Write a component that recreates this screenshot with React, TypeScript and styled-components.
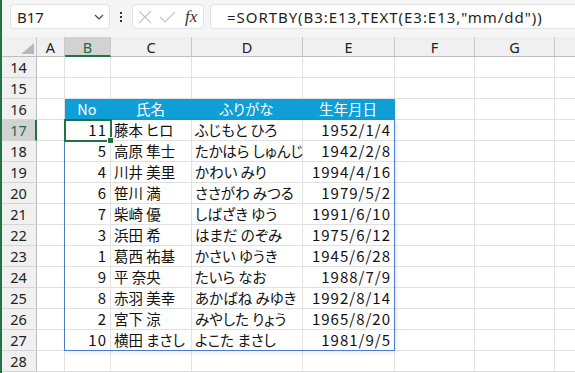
import React from "react";
import styled, { createGlobalStyle } from "styled-components";

const GlobalStyle = createGlobalStyle`
  html, body { margin: 0; padding: 0; background: #ffffff; }
  body { width: 575px; height: 373px; overflow: hidden; }
`;

const GREEN = "#217346";
const HEADER_BLUE = "#0f9ed5";
const GRID = "#e1e1e1";
const CELL_FONT = `"Noto Sans CJK JP", "Noto Sans", sans-serif`;
const UI_FONT = `"Noto Sans", "Open Sans", sans-serif`;

const Window = styled.div`
  width: 575px;
  height: 373px;
  border-left: 2px solid ${GREEN};
  box-sizing: border-box;
  overflow: hidden;
  background: #fff;
  display: flex;
  flex-direction: column;
`;

const FormulaBar = styled.div`
  height: 37px;
  flex: none;
  background: #f5f5f5;
  display: flex;
  align-items: flex-start;
  padding: 4px 0 0 8px;
  box-sizing: border-box;
  overflow: hidden;
`;

const Box = styled.div<{ $w: number }>`
  width: ${(p) => p.$w}px;
  flex: none;
  height: 25px;
  background: #fff;
  border: 1px solid #e3e3e3;
  border-radius: 4px;
  box-sizing: border-box;
  display: flex;
  align-items: center;
`;

const NameText = styled.span`
  font-family: ${UI_FONT};
  font-size: 15px;
  color: #1f1f1f;
  padding-left: 6px;
  flex: 1;
`;

const Chevron = styled.svg`
  width: 10px;
  height: 6px;
  margin-right: 5px;
`;

const Dots = styled.div`
  width: 22px;
  flex: none;
  height: 25px;
  display: flex;
  flex-direction: column;
  align-items: center;
  justify-content: center;
  gap: 2px;
  & > span {
    width: 2px;
    height: 2px;
    background: #333;
    display: block;
  }
`;

const ButtonRow = styled.div`
  display: flex;
  align-items: center;
  gap: 7px;
  padding-left: 5px;
`;

const Fx = styled.span`
  font-family: "Liberation Serif", "DejaVu Serif", serif;
  font-style: italic;
  font-size: 17px;
  color: #333;
  margin-left: 2px;
  line-height: 1;
`;

const FormulaText = styled.span`
  font-family: ${UI_FONT};
  font-size: 15px;
  letter-spacing: 0.95px;
  color: #1f1f1f;
  padding-left: 16px;
  white-space: nowrap;
`;

const Spacer = styled.div<{ $w: number }>`
  width: ${(p) => p.$w}px;
  flex: none;
`;

const SheetWrap = styled.div`
  position: relative;
  flex: 1;
  overflow: hidden;
`;

const COLS = ["A", "B", "C", "D", "E", "F", "G", ""];
const WIDTHS = [35, 28, 46, 81, 111, 92, 80, 80, 80];

const Sheet = styled.div`
  display: grid;
  grid-template-columns: ${WIDTHS.map((w) => w + "px").join(" ")};
  grid-template-rows: 20px;
  grid-auto-rows: 21px;
  width: ${WIDTHS.reduce((a, b) => a + b, 0)}px;
`;

const Corner = styled.div`
  background: #f0f0f0;
  border-right: 1px solid #c8c8c8;
  border-bottom: 1px solid #bdbdbd;
  box-sizing: border-box;
  display: flex;
  align-items: flex-end;
  justify-content: flex-end;
  padding: 0 2px 2px 0;
`;

const ColHead = styled.div<{ $sel?: boolean }>`
  background: ${(p) => (p.$sel ? "#d2d2d2" : "#f0f0f0")};
  color: ${(p) => (p.$sel ? "#1d6b3f" : "#222")};
  border-right: 1px solid #c8c8c8;
  border-bottom: ${(p) => (p.$sel ? `2px solid ${GREEN}` : "1px solid #bdbdbd")};
  box-sizing: border-box;
  font-family: ${UI_FONT};
  font-size: 14.5px;
  display: flex;
  align-items: center;
  justify-content: center;
  padding-top: ${(p) => (p.$sel ? 1 : 0)}px;
`;

const RowHead = styled.div<{ $sel?: boolean }>`
  background: ${(p) => (p.$sel ? "#d2d2d2" : "#f0f0f0")};
  color: ${(p) => (p.$sel ? "#1d6b3f" : "#222")};
  border-right: ${(p) => (p.$sel ? `2px solid ${GREEN}` : "1px solid #bdbdbd")};
  border-bottom: 1px solid #d4d4d4;
  box-sizing: border-box;
  font-family: ${UI_FONT};
  font-size: 14.5px;
  display: flex;
  align-items: center;
  justify-content: center;
  padding-right: ${(p) => (p.$sel ? 0 : 1)}px;
`;

const Cell = styled.div<{ $align?: "left" | "right" | "center"; $head?: boolean; $num?: boolean }>`
  border-right: 1px solid ${(p) => (p.$head ? HEADER_BLUE : GRID)};
  border-bottom: 1px solid ${(p) => (p.$head ? HEADER_BLUE : GRID)};
  background: ${(p) => (p.$head ? HEADER_BLUE : "#fff")};
  color: ${(p) => (p.$head ? "#fff" : "#111")};
  box-sizing: border-box;
  font-family: ${CELL_FONT};
  font-size: ${(p) => (p.$num ? "15px" : "14.5px")};
  letter-spacing: ${(p) => (p.$num ? "1px" : "0")};
  font-feature-settings: "palt";
  line-height: 20px;
  white-space: nowrap;
  display: flex;
  align-items: flex-end;
  justify-content: ${(p) =>
    p.$align === "right" ? "flex-end" : p.$align === "center" ? "center" : "flex-start"};
  padding: ${(p) => (p.$num ? "0 3px 0 3px" : "0 4px 0 3px")};
`;

const SpillBorder = styled.div`
  position: absolute;
  left: 62px;
  top: 82px;
  width: 331px;
  height: 232px;
  border: 1px solid #4a7bd0;
  box-sizing: border-box;
  pointer-events: none;
  box-shadow: 2px 2px 4px rgba(0, 0, 0, 0.08);
`;

const Selection = styled.div`
  position: absolute;
  left: 62px;
  top: 82px;
  width: 48px;
  height: 23px;
  border: 2px solid ${GREEN};
  box-sizing: border-box;
  pointer-events: none;
`;

const Handle = styled.div`
  position: absolute;
  right: -4px;
  bottom: -4px;
  width: 5px;
  height: 5px;
  background: ${GREEN};
  border: 1px solid #fff;
  box-sizing: content-box;
`;

type Row = [number, string, string, string];
const DATA: Row[] = [
  [11, "藤本 ヒロ", "ふじもと ひろ", "1952/1/4"],
  [5, "高原 隼士", "たかはら しゅんじ", "1942/2/8"],
  [4, "川井 美里", "かわい みり", "1994/4/16"],
  [6, "笹川 満", "ささがわ みつる", "1979/5/2"],
  [7, "柴崎 優", "しばざき ゆう", "1991/6/10"],
  [3, "浜田 希", "はまだ のぞみ", "1975/6/12"],
  [1, "葛西 祐基", "かさい ゆうき", "1945/6/28"],
  [9, "平 奈央", "たいら なお", "1988/7/9"],
  [8, "赤羽 美幸", "あかばね みゆき", "1992/8/14"],
  [2, "宮下 涼", "みやした りょう", "1965/8/20"],
  [10, "横田 まさし", "よこた まさし", "1981/9/5"],
];

const Empty = ({ n }: { n: number }) => (
  <>
    {Array.from({ length: n }).map((_, i) => (
      <Cell key={i} />
    ))}
  </>
);

export default function App() {
  return (
    <>
      <GlobalStyle />
      <Window>
        <FormulaBar>
          <Box $w={100}>
            <NameText>B17</NameText>
            <Chevron viewBox="0 0 10 6">
              <polyline points="1,1 5,5 9,1" fill="none" stroke="#444" strokeWidth="1.2" />
            </Chevron>
          </Box>
          <Dots>
            <span />
            <span />
            <span />
          </Dots>
          <Box $w={72}>
            <ButtonRow>
              <svg width="14" height="14" viewBox="0 0 14 14">
                <path d="M1 1 L13 13 M13 1 L1 13" stroke="#c4c4c4" strokeWidth="1.1" fill="none" />
              </svg>
              <svg width="17" height="14" viewBox="0 0 17 14">
                <polyline points="1,7 6,12 16,2" stroke="#c4c4c4" strokeWidth="1.1" fill="none" />
              </svg>
              <Fx>fx</Fx>
            </ButtonRow>
          </Box>
          <Spacer $w={6} />
          <Box $w={420}>
            <FormulaText>=SORTBY(B3:E13,TEXT(E3:E13,"mm/dd"))</FormulaText>
          </Box>
        </FormulaBar>
        <SheetWrap>
          <Sheet>
            <Corner>
              <svg width="13" height="11" viewBox="0 0 13 11">
                <polygon points="13,0 13,11 0,11" fill="#b8b8b8" />
              </svg>
            </Corner>
            {COLS.map((c, i) => (
              <ColHead key={i} $sel={c === "B"}>
                {c}
              </ColHead>
            ))}

            <RowHead>14</RowHead>
            <Empty n={8} />
            <RowHead>15</RowHead>
            <Empty n={8} />

            <RowHead>16</RowHead>
            <Cell />
            <Cell $head $align="center">No</Cell>
            <Cell $head $align="center">氏名</Cell>
            <Cell $head $align="center">ふりがな</Cell>
            <Cell $head $align="center">生年月日</Cell>
            <Empty n={3} />

            {DATA.map((r, i) => (
              <React.Fragment key={i}>
                <RowHead $sel={i === 0}>{17 + i}</RowHead>
                <Cell />
                <Cell $align="right" $num>{r[0]}</Cell>
                <Cell>{r[1]}</Cell>
                <Cell>{r[2]}</Cell>
                <Cell $align="right" $num>{r[3]}</Cell>
                <Empty n={3} />
              </React.Fragment>
            ))}

            <RowHead>28</RowHead>
            <Empty n={8} />
          </Sheet>
          <SpillBorder />
          <Selection>
            <Handle />
          </Selection>
        </SheetWrap>
      </Window>
    </>
  );
}
